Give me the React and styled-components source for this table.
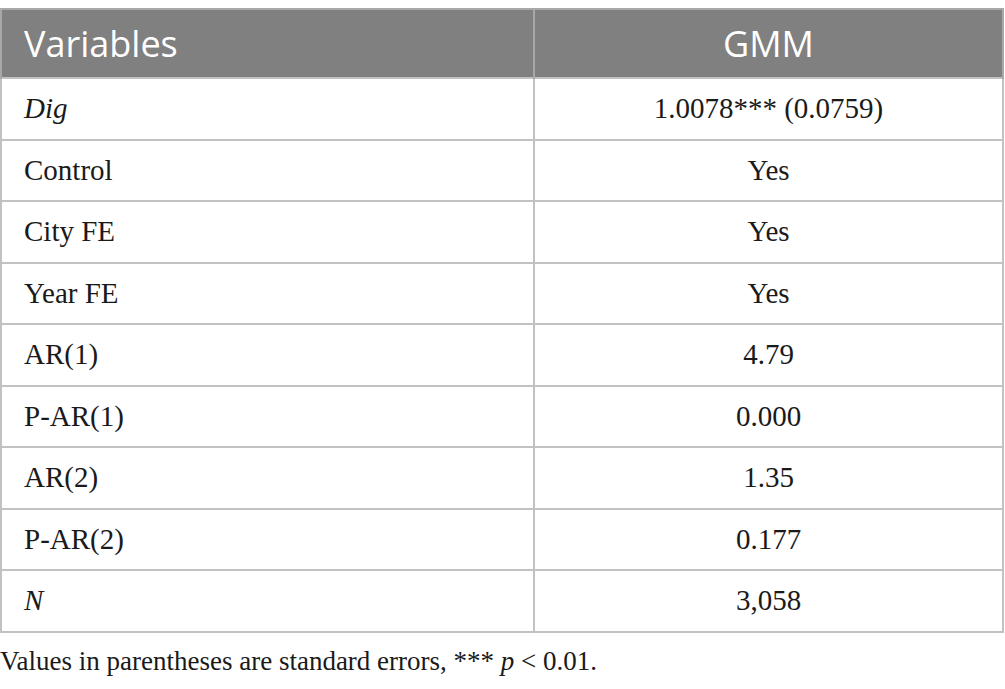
import React from 'react';
import styled, { createGlobalStyle } from 'styled-components';

const GlobalStyle = createGlobalStyle`
  body {
    margin: 0;
    background: #fff;
  }
`;

const Page = styled.div`
  padding-top: 8px;
  width: 1005px;
`;

const Table = styled.table`
  width: 1004px;
  border-collapse: collapse;
  table-layout: fixed;
`;

const HeadCell = styled.th`
  height: 67px;
  padding: 0 22px;
  background: #808080;
  color: #fff;
  font-family: 'Open Sans', 'Noto Sans', sans-serif;
  font-weight: 400;
  font-size: 36px;
  text-align: ${(props) => (props.center ? 'center' : 'left')};
  border: 1px solid #a8a8a8;
  border-width: 2px 2px 1px;
`;

const Cell = styled.td`
  height: 59.5px;
  padding: 0 22px;
  font-family: 'Liberation Serif', 'Times New Roman', serif;
  font-size: 29px;
  color: #1a1a1a;
  text-align: ${(props) => (props.center ? 'center' : 'left')};
  border: 2px solid #c2c2c2;
`;

const Caption = styled.p`
  margin: 13px 0 0;
  font-family: 'Liberation Serif', 'Times New Roman', serif;
  font-size: 27px;
  color: #1a1a1a;
`;

const rows = [
  [<i>Dig</i>, '1.0078*** (0.0759)'],
  ['Control', 'Yes'],
  ['City FE', 'Yes'],
  ['Year FE', 'Yes'],
  ['AR(1)', '4.79'],
  ['P-AR(1)', '0.000'],
  ['AR(2)', '1.35'],
  ['P-AR(2)', '0.177'],
  [<i>N</i>, '3,058'],
];

export default function App() {
  return (
    <Page>
      <GlobalStyle />
      <Table>
        <colgroup>
          <col style={{ width: 533 }} />
          <col />
        </colgroup>
        <thead>
          <tr>
            <HeadCell>Variables</HeadCell>
            <HeadCell center>GMM</HeadCell>
          </tr>
        </thead>
        <tbody>
          {rows.map((r, i) => (
            <tr key={i}>
              <Cell>{r[0]}</Cell>
              <Cell center>{r[1]}</Cell>
            </tr>
          ))}
        </tbody>
      </Table>
      <Caption>
        Values in parentheses are standard errors, *** <i>p</i> &lt; 0.01.
      </Caption>
    </Page>
  );
}
